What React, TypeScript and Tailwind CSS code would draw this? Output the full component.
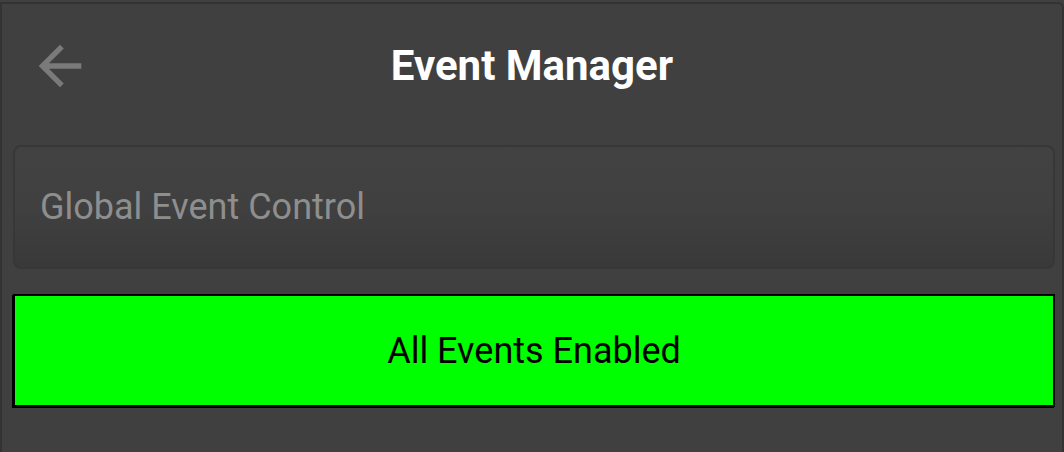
import React from "react";

export default function App() {
  return (
    <div className="w-[1064px] h-[452px] bg-[#404040] pt-[2px] overflow-hidden" style={{ fontFamily: "Roboto, 'Noto Sans', sans-serif" }}>
      <div className="h-[460px] border-t-2 border-l-2 border-r-2 border-[#333333] rounded-tr-[6px]">
        <div className="relative h-[141px] flex justify-center pt-[41px]">
          <svg className="absolute left-[26px] top-[30px] w-[64px] h-[64px]" viewBox="0 0 24 24" fill="#7a7a7a">
            <path d="M20 11H7.83l5.59-5.59L12 4l-8 8 8 8 1.41-1.41L7.83 13H20v-2z" />
          </svg>
          <div className="text-white font-bold text-[42px] leading-none h-[42px]">Event Manager</div>
        </div>
        <div className="pl-[11px] pr-[7px]">
          <div className="h-[124px] rounded-[8px] border-2 border-[#373737] bg-gradient-to-b from-[#424242] via-[#404040] to-[#393939] flex items-center px-[25px]">
            <span className="text-[#8e8e8e] text-[36px] leading-none">Global Event Control</span>
          </div>
          <div className="mt-[25px] h-[113px] border-2 border-black shadow-[-1px_1px_0_#000] bg-[#00ff00] flex items-center justify-center">
            <span className="text-black text-[36px] leading-none">All Events Enabled</span>
          </div>
        </div>
      </div>
    </div>
  );
}
